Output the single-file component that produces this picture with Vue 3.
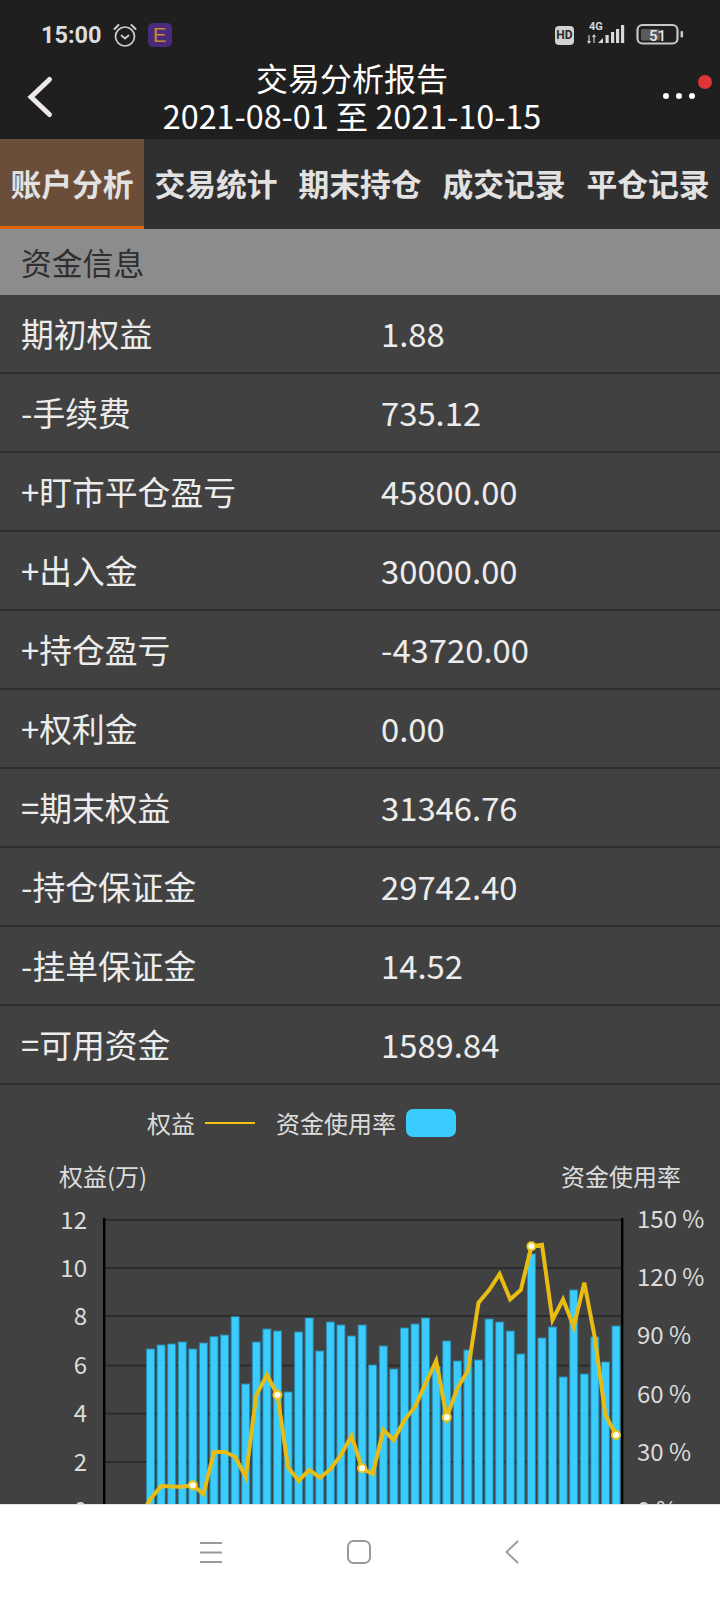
<script setup>
const tabs = ['账户分析', '交易统计', '期末持仓', '成交记录', '平仓记录']
const rows = [
  ['期初权益', '1.88'], ['-手续费', '735.12'], ['+盯市平仓盈亏', '45800.00'], ['+出入金', '30000.00'],
  ['+持仓盈亏', '-43720.00'], ['+权利金', '0.00'], ['=期末权益', '31346.76'], ['-持仓保证金', '29742.40'],
  ['-挂单保证金', '14.52'], ['=可用资金', '1589.84']
]
const barTops = [1349,1345,1344,1342,1349,1343,1336.7,1335,1316.7,1384,1342,1329,1331,1392,1332,1318,1351,1322,1325,1336,1325,1365,1346,1369,1328,1324,1318,1366,1341,1361,1350,1360,1319,1322,1331,1354,1254,1338,1327,1377,1290,1374,1337,1362,1326]
const lineY = [1499,1486,1486.5,1486.7,1485.3,1494,1452,1452,1456.7,1476.7,1395,1375,1395,1467.3,1480.7,1470,1477.7,1469.3,1455,1436,1468.3,1474,1430,1440,1420,1406.7,1383.3,1360.7,1417.3,1388.3,1370.7,1302.7,1290,1274,1299.3,1290,1246.3,1244.7,1320,1299.3,1326.7,1282.7,1338,1415,1435]
const xAt = (i) => 150.5 + 10.58 * i
const bars = barTops.map((top, i) => ({ x: xAt(i) - 4, y: top, h: 1512 - top }))
const linePoints = '139.9,1517 ' + lineY.map((y, i) => `${xAt(i).toFixed(1)},${y}`).join(' ')
const dots = [4, 12, 20, 28, 36, 44].map((i) => ({ x: xAt(i), y: lineY[i] }))
const grid = [1220, 1268, 1316, 1365.5, 1413.7, 1462, 1510]
const leftTicks = ['12', '10', '8', '6', '4', '2', '0']
const rightTicks = ['150 %', '120 %', '90 %', '60 %', '30 %', '0 %']
const rightY = [1219, 1277, 1335, 1394, 1452, 1510]
</script>

<template>
  <div class="page">
    <header class="head">
      <div class="status">
        <span class="time">15:00</span>
        <svg class="alarm" width="26" height="26" viewBox="0 0 26 26" fill="none" stroke="#cfcfcf">
          <circle cx="13" cy="14.5" r="9.5" stroke-width="1.7" />
          <path d="M2.5 7 6.5 3M23.5 7 19.5 3" stroke-width="2" stroke-linecap="round" />
          <path d="M9.5 13.5 13 16.5 16.5 13.5" stroke-width="1.7" stroke-linecap="round" stroke-linejoin="round" />
        </svg>
        <span class="eicon">E</span>
        <span class="spacer"></span>
        <span class="hd">HD</span>
        <svg class="net" width="128" height="28" viewBox="576 22 128 28">
          <text x="589" y="31" class="g4">4G</text>
          <path d="M589 36v8M587.5 42l1.5 2 1.5-2M594 44v-8M592.5 38l1.5-2 1.5 2" stroke="#cfcfcf" stroke-width="1.2" fill="none" />
          <path d="M598 44 603 39v5z" fill="#d8d8d8" />
          <rect x="605.5" y="36" width="3.2" height="8" fill="#d8d8d8" />
          <rect x="611" y="33" width="3.2" height="11" fill="#d8d8d8" />
          <rect x="616" y="30" width="3.2" height="14" fill="#d8d8d8" />
          <rect x="621" y="26" width="3.2" height="18" fill="#d8d8d8" />
          <rect x="637.5" y="26" width="40" height="18.5" rx="5" fill="none" stroke="#c8c8c8" stroke-width="2.2" />
          <rect x="641" y="30" width="19" height="11.5" rx="1.5" fill="#5a5a5a" />
          <text x="649" y="41.5" class="batt">51</text>
          <rect x="680.5" y="32" width="2.6" height="6.5" rx="1" fill="#c8c8c8" />
        </svg>
      </div>
      <div class="titlebar">
        <div class="back">
          <svg width="30" height="44" viewBox="24 74 30 44" fill="none">
            <path d="M49.5 78.5 31 96 49.5 113.5" stroke="#eee9e6" stroke-width="5" stroke-linecap="round" stroke-linejoin="miter" />
          </svg>
        </div>
        <div class="titles">
          <div class="t1">交易分析报告</div>
          <div class="t2">2021-08-01 至 2021-10-15</div>
        </div>
        <div class="more">
          <span class="dot"></span><span class="dot"></span><span class="dot"></span>
          <span class="badge"></span>
        </div>
      </div>
    </header>

    <nav class="tabs">
      <div v-for="(t, i) in tabs" :key="t" class="tab" :class="{ active: i === 0 }">{{ t }}</div>
    </nav>

    <main class="main">
      <div class="section">资金信息</div>
      <div v-for="r in rows" :key="r[0]" class="row">
        <span class="label">{{ r[0] }}</span>
        <span class="value">{{ r[1] }}</span>
      </div>

      <div class="legend">
        <span>权益</span>
        <i class="lg-line"></i>
        <span class="lg-second">资金使用率</span>
        <i class="lg-swatch"></i>
      </div>

      <svg class="chart" width="720" height="354" viewBox="0 1150 720 354">
        <text x="59" y="1186" class="ct">权益(万)</text>
        <text x="681" y="1186" class="ct" text-anchor="end">资金使用率</text>
        <rect v-for="y in grid" :key="y" x="105" :y="y - 1" width="516" height="2" fill="#2c2c2c" />
        <rect v-for="(b, i) in bars" :key="i" :x="b.x" :y="b.y" width="8" :height="b.h" fill="#3acbff" stroke="#2e88a8" stroke-width="1" />
        <rect x="103" y="1218" width="2.4" height="300" fill="#000" />
        <rect x="621" y="1218" width="2.4" height="300" fill="#000" />
        <polyline :points="linePoints" fill="none" stroke="#e9bc14" stroke-width="4" stroke-linejoin="miter" />
        <circle v-for="d in dots" :key="d.x" :cx="d.x" :cy="d.y" r="4" fill="#fff" stroke="#eec514" stroke-width="2" />
        <text v-for="(t, i) in leftTicks" :key="t" x="87" :y="grid[i] + 8.5" class="tick" text-anchor="end">{{ t }}</text>
        <text v-for="(t, i) in rightTicks" :key="t" x="637" :y="rightY[i] + 9" class="tick">{{ t }}</text>
      </svg>
    </main>

    <footer class="nav">
      <svg class="n1" width="22" height="22" viewBox="0 0 22 22" stroke="#999" stroke-width="1.8">
        <path d="M0 2h22M0 11.500h22M0 21h22" />
      </svg>
      <svg class="n2" width="24" height="24" viewBox="0 0 24 24" fill="none" stroke="#999" stroke-width="2">
        <rect x="1" y="1" width="22" height="22" rx="5.500" />
      </svg>
      <svg class="n3" width="14" height="24" viewBox="0 0 14 24" fill="none" stroke="#999" stroke-width="1.800">
        <path d="M13 1 1.500 12 13 23" />
      </svg>
    </footer>
  </div>
</template>

<style scoped>
.page {
  width: 720px;
  height: 1600px;
  display: flex;
  flex-direction: column;
  overflow: hidden;
  background: #414141;
  font-family: "Noto Sans CJK SC", "Noto Sans", sans-serif;
}
.head {
  height: 139px;
  flex: none;
  background: #1f1f1f;
  color: #fff;
}
.status {
  height: 58px;
  display: flex;
  align-items: center;
  padding: 12px 16px 0 41px;
  box-sizing: border-box;
}
.time {
  font: 700 23.500px Roboto, sans-serif;
  color: #dcdcdc;
}
.alarm { margin-left: 10px; }
.eicon {
  width: 24px;
  height: 24px;
  margin-left: 10px;
  border-radius: 5px;
  background: #4b2a7c;
  color: #c98a2a;
  font: 400 20px/24px "Liberation Sans", sans-serif;
  text-align: center;
}
.spacer { flex: 1; }
.hd {
  width: 19px;
  height: 19px;
  border-radius: 4px;
  background: #d2d2d2;
  color: #2a2a2a;
  font: 700 12px/19px Roboto, sans-serif;
  text-align: center;
  margin-right: 2px;
}
.net { display: block; }
.g4 {
  font: 700 11px Roboto, sans-serif;
  fill: #d8d8d8;
}
.batt {
  font: 500 15px Roboto, sans-serif;
  fill: #e6e6e6;
}
.titlebar {
  height: 81px;
  display: grid;
  grid-template-columns: 72px 1fr 88px;
  align-items: center;
}
.back {
  padding-left: 24px;
  display: flex;
  margin-top: -3px;
}
.titles {
  text-align: center;
  margin-top: -5px;
}
.t1 {
  font-size: 32px;
  line-height: 38px;
}
.t2 {
  font-size: 32.300px;
  line-height: 38px;
  white-space: nowrap;
}
.more {
  position: relative;
  height: 100%;
  display: flex;
  align-items: flex-start;
  gap: 7px;
  padding: 35px 0 0 31px;
  box-sizing: border-box;
}
.dot {
  width: 6px;
  height: 6px;
  border-radius: 50%;
  background: #fff;
}
.badge {
  position: absolute;
  left: 66px;
  top: 17px;
  width: 14px;
  height: 14px;
  border-radius: 50%;
  background: #e03437;
}
.tabs {
  height: 90px;
  flex: none;
  display: grid;
  grid-template-columns: repeat(5, 1fr);
  background: #303030;
}
.tab {
  text-align: center;
  font-size: 30.800px;
  font-weight: 700;
  line-height: 87px;
  color: #e2e2e2;
  white-space: nowrap;
  box-sizing: border-box;
}
.tab.active {
  background: #6b4e3a;
  border-bottom: 4px solid #e0650c;
}
.main {
  flex: 1;
  min-height: 0;
  overflow: hidden;
  background: #414141;
}
.section {
  height: 66px;
  padding-left: 21px;
  background: #8c8c8c;
  color: #2f2f2f;
  font-size: 30.800px;
  line-height: 65px;
}
.row {
  height: 79px;
  box-sizing: border-box;
  display: flex;
  align-items: center;
  padding: 0 0 2px 21px;
  border-bottom: 2px solid #2e2e2e;
  color: #ececec;
  font-size: 32.800px;
}
.label { width: 360px; }
.legend {
  height: 65px;
  box-sizing: border-box;
  padding: 23px 0 0 147px;
  display: flex;
  align-items: flex-start;
  color: #dcdcdc;
  font-size: 24px;
  line-height: 30px;
}
.lg-line {
  width: 50px;
  height: 2px;
  margin: 14px 0 0 10px;
  background: #f0c010;
}
.lg-second { margin-left: 21px; }
.lg-swatch {
  width: 50px;
  height: 28px;
  margin: 1px 0 0 10px;
  border-radius: 7px;
  background: #3acbff;
}
.chart { display: block; }
.ct, .tick {
  font-family: "Noto Sans CJK SC", sans-serif;
  font-size: 24px;
  fill: #dcdcdc;
}
.nav {
  height: 96px;
  flex: none;
  box-sizing: border-box;
  background: #fff;
  border-top: 1px solid #e6e6e6;
  display: flex;
  align-items: center;
  padding: 0 0 2px 200px;
}
.n2 { margin-left: 125px; }
.n3 { margin-left: 134px; }
</style>
